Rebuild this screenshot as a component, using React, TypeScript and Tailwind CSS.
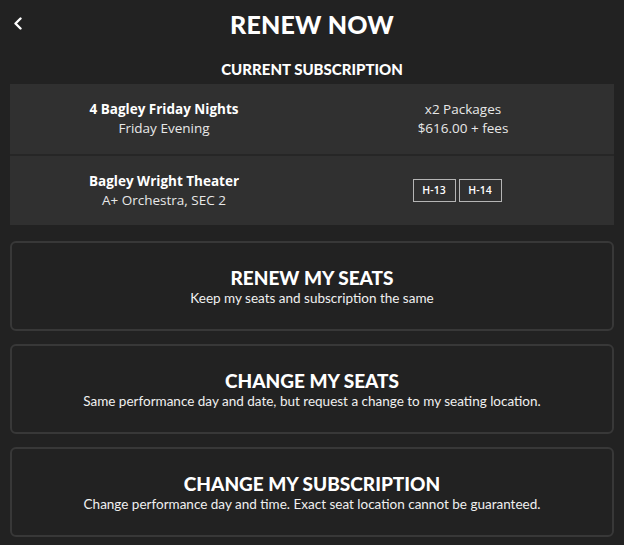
const seats = ['H-13', 'H-14']

const options = [
  { title: 'RENEW MY SEATS', text: 'Keep my seats and subscription the same' },
  { title: 'CHANGE MY SEATS', text: 'Same performance day and date, but request a change to my seating location.' },
  { title: 'CHANGE MY SUBSCRIPTION', text: 'Change performance day and time. Exact seat location cannot be guaranteed.' },
]

export default function App() {
  return (
    <div className="h-[545px] w-[624px] overflow-hidden bg-[#222222] px-[10px] text-white font-['Lato',sans-serif]">
      {/* Header */}
      <div className="relative flex h-[48px] items-center justify-center">
        <button type="button" className="absolute left-[3px] top-[17px] text-white">
          <svg width="10" height="13" viewBox="0 0 10 13" fill="none">
            <path d="M7.5 1.5 L2.5 6.5 L7.5 11.5" stroke="white" strokeWidth="2.4" strokeLinecap="round" strokeLinejoin="round" />
          </svg>
        </button>
        <h1 className="text-[25px] font-black leading-none tracking-[0.2px]">RENEW NOW</h1>
      </div>

      <h2 className="mt-[14px] text-center text-[15px] font-black leading-none">CURRENT SUBSCRIPTION</h2>

      {/* Subscription summary */}
      <div className="mt-[7px] flex flex-col gap-[2px] bg-[#262626] font-['Open_Sans',sans-serif]">
        <div className="grid h-[70px] grid-cols-2 bg-[#303030]">
          <div className="flex flex-col items-center justify-center pl-[6px] leading-[19px]">
            <span className="text-[13.5px] font-bold">4 Bagley Friday Nights</span>
            <span className="text-[13.5px] text-[#e8e8e8]">Friday Evening</span>
          </div>
          <div className="flex flex-col items-center justify-center leading-[19px]">
            <span className="text-[13.5px] text-[#e8e8e8]">x2 Packages</span>
            <span className="text-[13.5px] text-[#e8e8e8]">$616.00 + fees</span>
          </div>
        </div>
        <div className="grid h-[69px] grid-cols-2 bg-[#303030]">
          <div className="flex flex-col items-center justify-center pl-[6px] leading-[19px]">
            <span className="text-[13.5px] font-bold">Bagley Wright Theater</span>
            <span className="text-[13.5px] text-[#e8e8e8]">A+ Orchestra, SEC 2</span>
          </div>
          <div className="flex items-center justify-center gap-[3px] pr-[12px]">
            {seats.map((s) => (
              <span
                key={s}
                className="flex h-[23px] w-[43px] items-center justify-center border border-[#b5b5b5] text-[10.5px] font-semibold"
              >
                {s}
              </span>
            ))}
          </div>
        </div>
      </div>

      {/* Options */}
      <div className="mt-[16px] flex flex-col gap-[13px]">
        {options.map((o) => (
          <button
            key={o.title}
            type="button"
            className="flex h-[90px] flex-col items-center justify-center rounded-[6px] border-2 border-[#383838] bg-[#222222] pt-[2px]"
          >
            <span className="text-[19px] font-black leading-[22px]">{o.title}</span>
            <span className="text-[13.5px] leading-[18px] text-[#f0f0f0]">{o.text}</span>
          </button>
        ))}
      </div>
    </div>
  )
}
